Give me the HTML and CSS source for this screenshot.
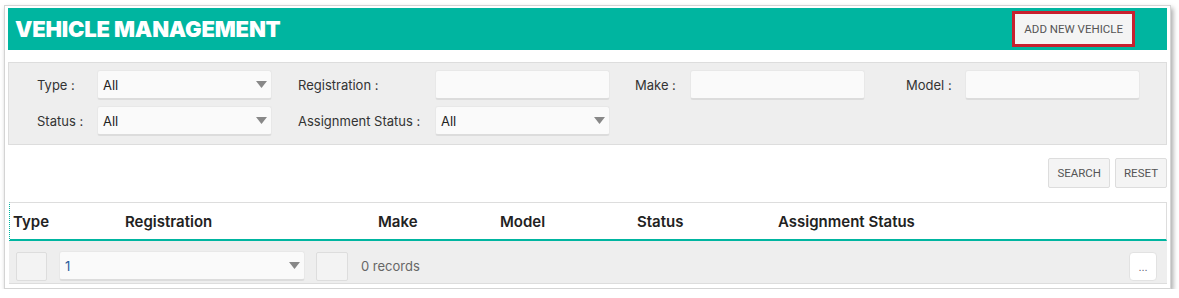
FILE: index.html
```html
<!DOCTYPE html>
<html lang="en">
<head>
    <meta charset="UTF-8">
    <meta name="viewport" content="width=device-width, initial-scale=1.0">
    <title>Vehicle Management</title>
    <link rel="stylesheet" href="styles.css">
</head>
<body>
    <div class="panel">
        <div class="title-bar">
            <h1>VEHICLE MANAGEMENT</h1>
            <button class="btn btn-add">ADD NEW VEHICLE</button>
        </div>

        <div class="filters">
            <label class="lbl">Type :</label>
            <div class="field select"><span>All</span><svg width="11" height="7" viewBox="0 0 11 7"><path d="M0 0H11L5.5 7Z" fill="#888"/></svg></div>
            <label class="lbl lbl-2">Registration :</label>
            <div class="field"></div>
            <label class="lbl lbl-3">Make :</label>
            <div class="field"></div>
            <label class="lbl lbl-4">Model :</label>
            <div class="field"></div>

            <label class="lbl">Status :</label>
            <div class="field select"><span>All</span><svg width="11" height="7" viewBox="0 0 11 7"><path d="M0 0H11L5.5 7Z" fill="#888"/></svg></div>
            <label class="lbl lbl-2">Assignment Status :</label>
            <div class="field select"><span>All</span><svg width="11" height="7" viewBox="0 0 11 7"><path d="M0 0H11L5.5 7Z" fill="#888"/></svg></div>
        </div>

        <div class="actions">
            <button class="btn">SEARCH</button>
            <button class="btn">RESET</button>
        </div>

        <div class="grid-head">
            <div>Type</div>
            <div>Registration</div>
            <div>Make</div>
            <div>Model</div>
            <div>Status</div>
            <div>Assignment Status</div>
        </div>

        <div class="pager">
            <div class="pg-box"></div>
            <div class="field select pg-select"><span>1</span><svg width="11" height="7" viewBox="0 0 11 7"><path d="M0 0H11L5.5 7Z" fill="#888"/></svg></div>
            <div class="pg-box pg-box-2"></div>
            <span class="records">0 records</span>
            <button class="more">...</button>
        </div>
    </div>
</body>
</html>
```

FILE: styles.css
```css
body {
    margin: 0;
    padding: 5px 0 0 4px;
    background: #fff;
    font-family: Inter, "Noto Sans", sans-serif;
    font-size: 13px;
    color: #333;
}
.panel {
    width: 1159px;
    border: 1px solid #d4d4d4;
    padding: 2px 3px 4px 3px;
    background: #fff;
    box-shadow: 2px 3px 5px rgba(0, 0, 0, 0.35);
}
.title-bar {
    height: 42px;
    background: #00b5a0;
    display: flex;
    align-items: center;
    justify-content: space-between;
    padding: 0 32px 0 7px;
}
.title-bar h1 {
    margin: 0;
    color: #fff;
    font-size: 22px;
    font-weight: 900;
    letter-spacing: -0.2px;
}
.btn {
    font-family: Roboto, "Liberation Sans", sans-serif;
    font-size: 11.5px;
    color: #555;
    background: #f4f4f4;
    border: 1px solid #ddd;
    border-radius: 2px;
    height: 30px;
    padding: 0 8px;
    cursor: pointer;
}
.btn-add {
    height: 36px;
    border: 3px solid #c8202f;
    border-radius: 0;
    padding: 0 9px;
}

/* filter area */
.filters {
    margin-top: 12px;
    background: #eee;
    border: 1px solid #ddd;
    padding: 7px 0 8px 28px;
    display: grid;
    grid-template-columns: 60px 175px 163px 175px 80px 175px 100px 175px;
    row-gap: 6px;
    align-items: center;
}
.lbl {
    color: #333;
}
.lbl-2 { padding-left: 26px; }
.lbl-3 { padding-left: 25px; }
.lbl-4 { padding-left: 41px; }
.field {
    height: 30px;
    box-sizing: border-box;
    background: #fafafa;
    border: 1px solid #e8e8e8;
    border-bottom: 2px solid #dcdcdc;
    border-radius: 3px;
}
.select {
    display: flex;
    align-items: center;
    justify-content: space-between;
    padding: 0 4px 0 5px;
    color: #222;
}

.actions {
    display: flex;
    justify-content: flex-end;
    gap: 5px;
    margin: 13px 0 14px 0;
}

/* grid header */
.grid-head {
    height: 36px;
    border: 1px solid #ddd;
    border-left: 1px dotted #00b5a0;
    border-bottom: 2px solid #00b5a0;
    margin-left: 1px;
    display: grid;
    grid-template-columns: 112px 253px 122px 137px 141px 1fr;
    align-items: center;
    padding-left: 3px;
    font-size: 15px;
    font-weight: 600;
    color: #222;
}

.pager {
    margin-left: 1px;
    height: 43px;
    box-sizing: border-box;
    background: #eee;
    border-bottom: 1px solid #ddd;
    display: flex;
    align-items: flex-end;
    padding: 0 10px 2px 7px;
}
.pg-box {
    width: 31px;
    height: 29px;
    box-sizing: border-box;
    background: #f3f3f3;
    border: 1px solid #ddd;
    border-radius: 2px;
}
.pg-select {
    width: 246px;
    height: 30px;
    margin-left: 12px;
    color: #2a5d9a;
}
.pg-box-2 {
    width: 32px;
    margin-left: 11px;
}
.records {
    margin-left: 13px;
    color: #666;
    align-self: center;
    padding-top: 9px;
}
.more {
    margin-left: auto;
    width: 28px;
    height: 29px;
    background: #fff;
    border: 1px solid #e2e2e2;
    border-radius: 4px;
    color: #667;
    font-size: 11px;
    padding: 0;
}
```
